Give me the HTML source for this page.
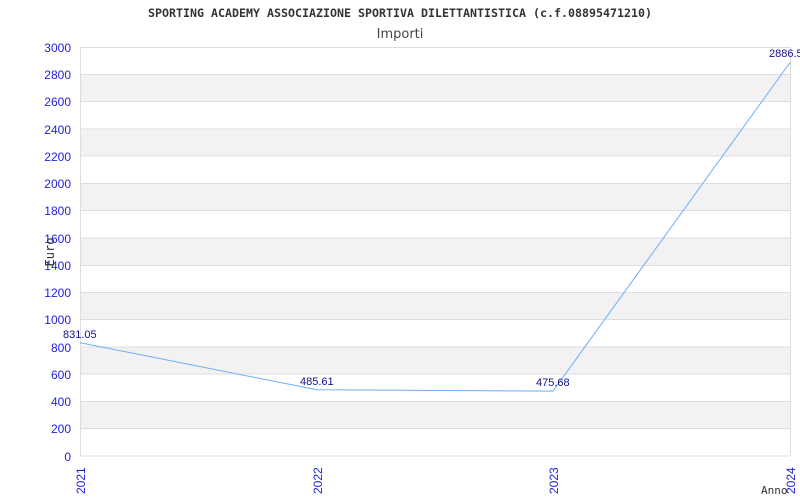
<!DOCTYPE html>
<html><head><meta charset="utf-8"><style>
html,body{margin:0;padding:0;background:#fff;width:800px;height:500px;overflow:hidden}
</style></head><body>
<svg width="800" height="500" xmlns="http://www.w3.org/2000/svg" font-family="Liberation Sans, sans-serif">
<rect width="800" height="500" fill="#fff"/>
<text x="148" y="17" textLength="504" lengthAdjust="spacingAndGlyphs" font-family="DejaVu Sans Mono, Liberation Mono, monospace" font-weight="bold" font-size="11.5" fill="#333">SPORTING ACADEMY ASSOCIAZIONE SPORTIVA DILETTANTISTICA (c.f.08895471210)</text>
<text x="400" y="38" text-anchor="middle" font-family="DejaVu Sans, sans-serif" font-size="13" fill="#444">Importi</text>
<g fill="#f2f2f2">
<rect x="81" y="74.27" width="709" height="27.27"/>
<rect x="81" y="128.8" width="709" height="27.27"/>
<rect x="81" y="183.3" width="709" height="27.27"/>
<rect x="81" y="237.9" width="709" height="27.27"/>
<rect x="81" y="292.4" width="709" height="27.27"/>
<rect x="81" y="346.9" width="709" height="27.27"/>
<rect x="81" y="401.5" width="709" height="27.27"/>
</g>
<g stroke="#ddd" stroke-width="1">
<line x1="80" x2="790" y1="47.5" y2="47.5"/>
<line x1="80" x2="790" y1="74.5" y2="74.5"/>
<line x1="80" x2="790" y1="101.5" y2="101.5"/>
<line x1="80" x2="790" y1="129" y2="129"/>
<line x1="80" x2="790" y1="156" y2="156"/>
<line x1="80" x2="790" y1="183.5" y2="183.5"/>
<line x1="80" x2="790" y1="210.5" y2="210.5"/>
<line x1="80" x2="790" y1="238" y2="238"/>
<line x1="80" x2="790" y1="265.5" y2="265.5"/>
<line x1="80" x2="790" y1="292.5" y2="292.5"/>
<line x1="80" x2="790" y1="319.5" y2="319.5"/>
<line x1="80" x2="790" y1="347" y2="347"/>
<line x1="80" x2="790" y1="374" y2="374"/>
<line x1="80" x2="790" y1="401.5" y2="401.5"/>
<line x1="80" x2="790" y1="428.5" y2="428.5"/>
<line x1="80" x2="790" y1="456" y2="456"/>
<line x1="80.5" x2="80.5" y1="47" y2="456"/>
<line x1="790.5" x2="790.5" y1="47" y2="456"/>
</g>
<g fill="#22d" font-size="12" text-anchor="end">
<text x="71" y="52">3000</text><text x="71" y="79">2800</text><text x="71" y="106">2600</text>
<text x="71" y="134">2400</text><text x="71" y="161">2200</text><text x="71" y="188">2000</text>
<text x="71" y="215">1800</text><text x="71" y="243">1600</text><text x="71" y="270">1400</text>
<text x="71" y="297">1200</text><text x="71" y="324">1000</text><text x="71" y="352">800</text>
<text x="71" y="379">600</text><text x="71" y="406">400</text><text x="71" y="433">200</text>
<text x="71" y="461">0</text>
</g>
<text transform="translate(54,252) rotate(-90)" text-anchor="middle" font-family="DejaVu Sans Mono, monospace" font-size="12" fill="#333">Euro</text>
<g fill="#22d" font-size="12">
<text transform="translate(85,494) rotate(-90)">2021</text>
<text transform="translate(322,494) rotate(-90)">2022</text>
<text transform="translate(558,494) rotate(-90)">2023</text>
<text transform="translate(795,494) rotate(-90)">2024</text>
</g>
<text x="761" y="494" font-family="DejaVu Sans Mono, monospace" font-size="11" fill="#333">Anno</text>
<polyline points="80,342.7 317,389.8 553,391.1 790,62.5" fill="none" stroke="#6ab0f5" stroke-width="1"/>
<g fill="#118" font-size="11">
<text x="63" y="338">831.05</text>
<text x="300" y="385">485.61</text>
<text x="536" y="386">475.68</text>
<text x="769" y="57">2886.5</text>
</g>
</svg>
</body></html>
